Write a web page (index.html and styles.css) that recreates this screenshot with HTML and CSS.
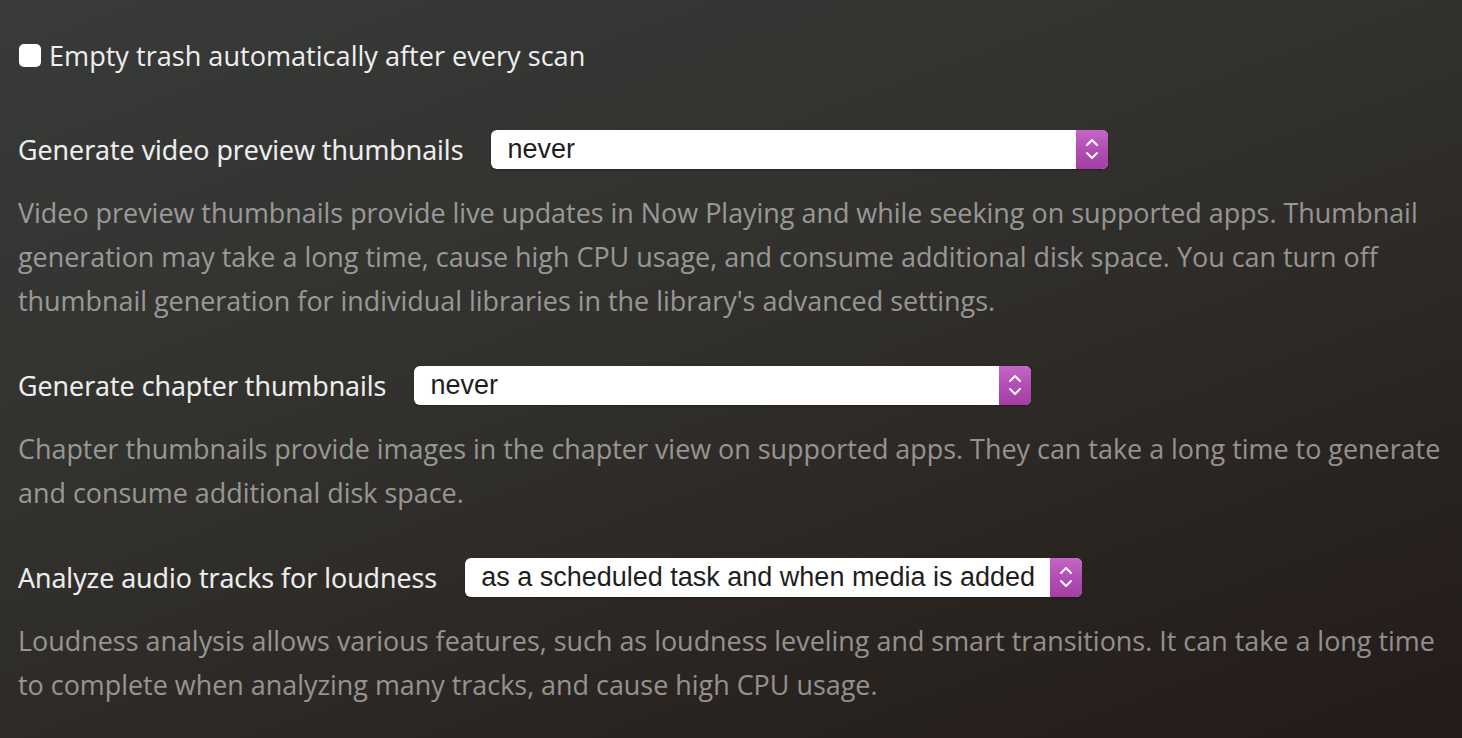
FILE: index.html
```html
<!DOCTYPE html>
<html>
<head>
<meta charset="utf-8">
<link rel="stylesheet" href="styles.css">
</head>
<body>
<div class="page">
  <label class="check-row">
    <span class="checkbox"></span>
    <span class="check-text">Empty trash automatically after every scan</span>
  </label>

  <div class="setting">
    <div class="setting-row">
      <span class="label">Generate video preview thumbnails</span>
      <div class="select">
        <span class="value">never</span>
        <span class="arrows"><svg width="14" height="24" viewBox="0 0 14 24"><path d="M2 8 L7 3 L12 8 M2 16 L7 21 L12 16" fill="none" stroke="#fff" stroke-width="2" stroke-linecap="round" stroke-linejoin="round"/></svg></span>
      </div>
    </div>
    <p class="help">Video preview thumbnails provide live updates in Now Playing and while seeking on supported apps. Thumbnail generation may take a long time, cause high CPU usage, and consume additional disk space. You can turn off thumbnail generation for individual libraries in the library's advanced settings.</p>
  </div>

  <div class="setting">
    <div class="setting-row">
      <span class="label">Generate chapter thumbnails</span>
      <div class="select">
        <span class="value">never</span>
        <span class="arrows"><svg width="14" height="24" viewBox="0 0 14 24"><path d="M2 8 L7 3 L12 8 M2 16 L7 21 L12 16" fill="none" stroke="#fff" stroke-width="2" stroke-linecap="round" stroke-linejoin="round"/></svg></span>
      </div>
    </div>
    <p class="help">Chapter thumbnails provide images in the chapter view on supported apps. They can take a long time to generate and consume additional disk space.</p>
  </div>

  <div class="setting">
    <div class="setting-row">
      <span class="label">Analyze audio tracks for loudness</span>
      <div class="select">
        <span class="value">as a scheduled task and when media is added</span>
        <span class="arrows"><svg width="14" height="24" viewBox="0 0 14 24"><path d="M2 8 L7 3 L12 8 M2 16 L7 21 L12 16" fill="none" stroke="#fff" stroke-width="2" stroke-linecap="round" stroke-linejoin="round"/></svg></span>
      </div>
    </div>
    <p class="help">Loudness analysis allows various features, such as loudness leveling and smart transitions. It can take a long time to complete when analyzing many tracks, and cause high CPU usage.</p>
  </div>
</div>
</body>
</html>
```

FILE: styles.css
```css
html, body {
  margin: 0;
  padding: 0;
  height: 100%;
}
body {
  background: linear-gradient(160deg, #383b39 0%, #31302c 45%, #2a2421 75%, #221b19 100%);
  font-family: "Open Sans", "Liberation Sans", sans-serif;
  color: #efefef;
  overflow: hidden;
}
.page {
  padding: 36px 0 0 18px;
}
.check-row {
  display: flex;
  align-items: center;
  gap: 8px;
  font-size: 27.1px;
  height: 38px;
}
.checkbox {
  width: 22px;
  height: 23px;
  margin-left: 1px;
  background: #ffffff;
  border-radius: 5px;
  flex: none;
}
.setting {
  margin-top: 55px;
}
.setting + .setting {
  margin-top: 42px;
}
.setting-row {
  display: flex;
  align-items: center;
  gap: 28px;
  height: 40px;
}
.label {
  font-size: 26.85px;
  white-space: nowrap;
  -webkit-text-stroke: 0.15px currentColor;
}
.select {
  width: 617px;
  height: 39px;
  background: #ffffff;
  border-radius: 6px;
  display: flex;
  align-items: center;
  overflow: hidden;
  box-shadow: 0 1px 2px rgba(0,0,0,0.3);
}
.value {
  flex: 1;
  padding-left: 16px;
  font-family: "Liberation Sans", Arial, sans-serif;
  font-size: 27px;
  color: #1e1e1e;
  white-space: nowrap;
}
.arrows {
  width: 32px;
  height: 39px;
  background: linear-gradient(180deg, #c466c4 0%, #b04cb2 55%, #a43ea6 100%);
  display: flex;
  align-items: center;
  justify-content: center;
  flex: none;
}
.help {
  margin: 22px 0 0 0;
  font-size: 26.92px;
  line-height: 44px;
  color: rgba(255, 255, 255, 0.5);
}
```
